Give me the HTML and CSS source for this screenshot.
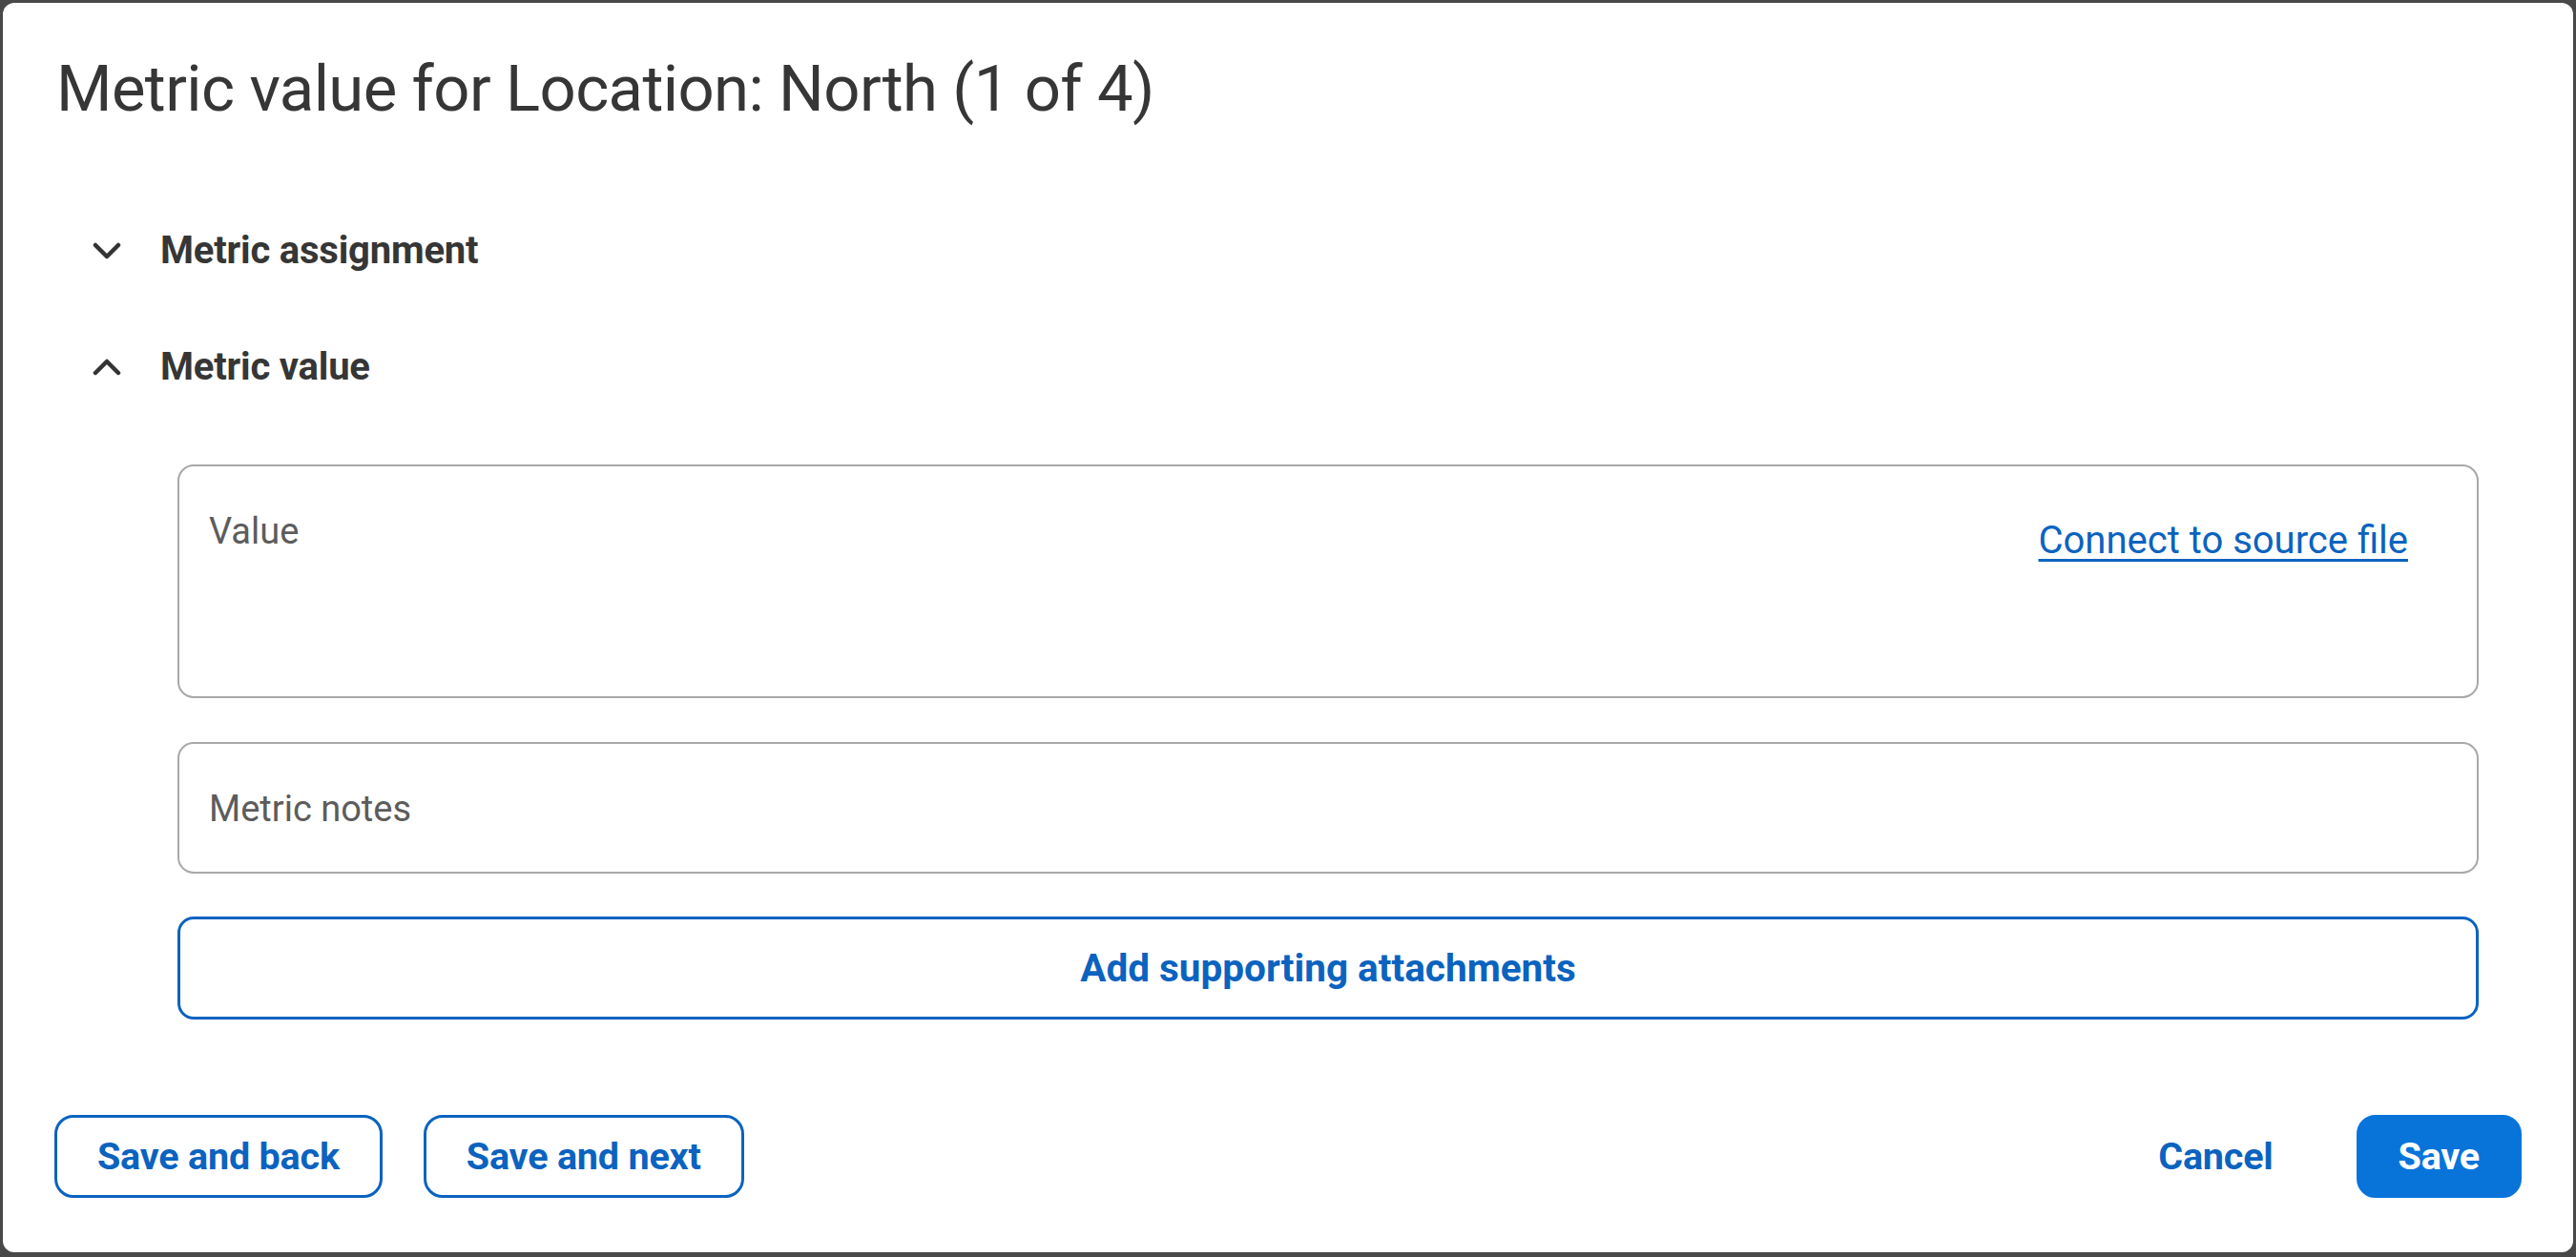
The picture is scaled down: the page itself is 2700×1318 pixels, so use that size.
FILE: index.html
```html
<!DOCTYPE html>
<html lang="en">
<head>
<meta charset="utf-8">
<title>Metric value</title>
<link rel="stylesheet" href="styles.css">
</head>
<body>
<div class="dialog">
  <h1 class="title">Metric value for Location: North (1 of 4)</h1>

  <div class="acc-header acc-first">
    <svg class="chev" viewBox="0 0 30 18" aria-hidden="true"><polyline points="3,3 15,15 27,3"/></svg>
    <span class="acc-title">Metric assignment</span>
  </div>
  <div class="acc-header acc-second">
    <svg class="chev" viewBox="0 0 30 18" aria-hidden="true"><polyline points="3,15 15,3 27,15"/></svg>
    <span class="acc-title">Metric value</span>
  </div>

  <div class="fields">
    <div class="field field-value">
      <span class="label">Value</span>
      <a class="link" href="#">Connect to source file</a>
    </div>
    <div class="field field-notes">
      <span class="label">Metric notes</span>
    </div>
    <button class="btn-attach">Add supporting attachments</button>
  </div>

  <div class="footer">
    <div class="footer-left">
      <button class="btn btn-outline">Save and back</button>
      <button class="btn btn-outline">Save and next</button>
    </div>
    <div class="footer-right">
      <button class="btn btn-text">Cancel</button>
      <button class="btn btn-primary">Save</button>
    </div>
  </div>
</div>
</body>
</html>
```

FILE: styles.css
```css
* { box-sizing: border-box; }

html, body {
  margin: 0;
  height: 100%;
}

body {
  background: #484848;
  padding: 3px 3px 0 3px;
  font-family: Roboto, "Liberation Sans", Arial, sans-serif;
  overflow: hidden;
}

.dialog {
  width: 2694px;
  height: 1310px;
  background: #ffffff;
  border-radius: 12px;
  padding: 50px 54px 0 56px;
  display: flex;
  flex-direction: column;
}

.title {
  margin: 0;
  font-size: 67px;
  line-height: 80px;
  font-weight: 400;
  color: #363636;
  letter-spacing: -0.6px;
}

.acc-header {
  display: flex;
  align-items: center;
  height: 46px;
}

.acc-first { margin-top: 107px; }
.acc-second { margin-top: 76px; }

.chev {
  width: 30px;
  height: 18px;
  margin-left: 38px;
  margin-right: 41px;
  flex: none;
}

.chev polyline {
  fill: none;
  stroke: #333333;
  stroke-width: 4.5;
  stroke-linecap: round;
  stroke-linejoin: round;
}

.acc-title {
  font-size: 40px;
  line-height: 46px;
  font-weight: 700;
  color: #363636;
  letter-spacing: -0.2px;
}

.fields {
  margin: 79px 45px 0 127px;
  display: flex;
  flex-direction: column;
}

.field {
  border: 2px solid #a8a8a8;
  border-radius: 17px;
  display: flex;
  align-items: flex-start;
  justify-content: space-between;
  padding: 45px 72px 0 31px;
}

.field-value { height: 245px; }

.field-notes {
  height: 138px;
  margin-top: 46px;
}

.label {
  font-size: 38px;
  line-height: 46px;
  color: #5c5c5c;
}

.link {
  font-size: 40px;
  line-height: 46px;
  margin-top: 10px;
  color: #0b63bf;
  text-decoration: underline;
  text-underline-offset: 6px;
  text-decoration-thickness: 3px;
}

.btn-attach {
  margin-top: 45px;
  height: 108px;
  border: 3px solid #0b63bf;
  border-radius: 17px;
  background: #ffffff;
  color: #0b63bf;
  font-family: inherit;
  font-size: 40.5px;
  line-height: 46px;
  font-weight: 700;
  padding: 0;
}

.footer {
  margin-top: 100px;
  margin-left: -2px;
  display: flex;
  justify-content: space-between;
  align-items: center;
}

.footer-left {
  display: flex;
  gap: 43px;
}

.footer-right {
  display: flex;
  gap: 44px;
}

.btn {
  height: 87px;
  border-radius: 20px;
  font-family: inherit;
  font-size: 39.5px;
  line-height: 46px;
  font-weight: 700;
  padding: 0 42px;
  background: #ffffff;
  color: #0b63bf;
  border: 3px solid transparent;
  letter-spacing: -0.2px;
}

.btn-outline { border-color: #0b63bf; }

.btn-text { background: transparent; padding: 0 40px; }

.btn-primary {
  background: #0874da;
  border-color: #0874da;
  color: #ffffff;
  padding: 0 41px;
}
```
